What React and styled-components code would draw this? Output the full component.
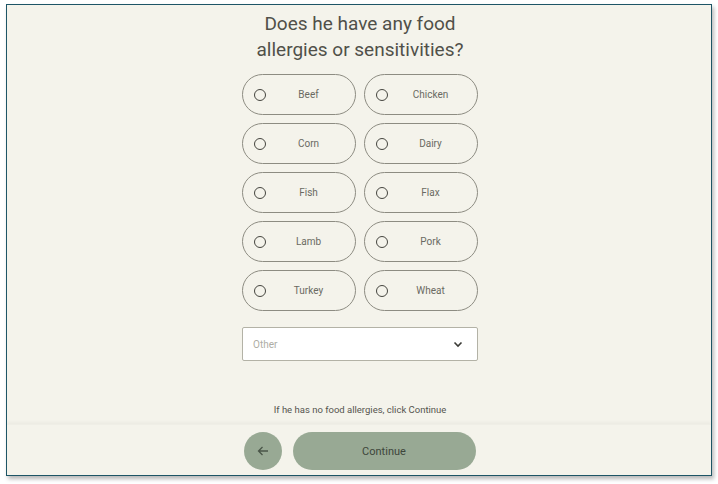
import React from "react";
import styled, { createGlobalStyle } from "styled-components";

const GlobalStyle = createGlobalStyle`
  html, body {
    margin: 0;
    padding: 0;
    background: #ffffff;
    font-family: Roboto, "Liberation Sans", sans-serif;
  }
`;

const Page = styled.div`
  padding: 4px 6px;
  width: 718px;
  height: 484px;
  box-sizing: border-box;
`;

const Frame = styled.div`
  width: 706px;
  height: 472px;
  box-sizing: border-box;
  border: 1px solid #1d5566;
  box-shadow: 2px 3px 4px rgba(0, 0, 0, 0.28);
  background: #f4f3eb;
  display: flex;
  flex-direction: column;
  overflow: hidden;
`;

const Main = styled.div`
  flex: 1;
  display: flex;
  flex-direction: column;
  align-items: center;
  padding: 6px 0 0 2px;
`;

const Title = styled.h1`
  margin: 0;
  font-size: 19px;
  line-height: 26px;
  font-weight: 400;
  color: #505049;
  text-align: center;
`;

const Grid = styled.div`
  margin-top: 11px;
  display: grid;
  grid-template-columns: 114px 114px;
  grid-auto-rows: 41px;
  gap: 8px 8px;
`;

const Pill = styled.label`
  display: flex;
  align-items: center;
  box-sizing: border-box;
  border: 1px solid #8d8c82;
  border-radius: 21px;
  padding: 0 10px 0 11px;
  cursor: pointer;
`;

const Radio = styled.span`
  width: 12px;
  height: 12px;
  box-sizing: border-box;
  border: 1.6px solid #45453f;
  border-radius: 50%;
  flex-shrink: 0;
`;

const PillLabel = styled.span`
  flex: 1;
  text-align: center;
  margin-left: 6px;
  font-size: 10px;
  color: #6a6a62;
`;

const Select = styled.div`
  margin-top: 16px;
  width: 236px;
  height: 34px;
  box-sizing: border-box;
  background: #ffffff;
  border: 1px solid #b3b2a6;
  border-radius: 2px;
  display: flex;
  align-items: center;
  justify-content: space-between;
  padding: 0 14px 0 10px;
`;

const Placeholder = styled.span`
  font-size: 10px;
  color: #aeada5;
`;

const Hint = styled.p`
  margin: 42px 0 0;
  font-size: 9.5px;
  line-height: 14px;
  color: #55554f;
`;

const Footer = styled.div`
  height: 51px;
  flex-shrink: 0;
  display: flex;
  align-items: center;
  justify-content: center;
  gap: 11px;
  padding: 2px 0 0 1px;
  box-sizing: border-box;
  box-shadow: 0 -2px 3px rgba(0, 0, 0, 0.035);
  border-top: 1px solid #efeee6;
`;

const BackButton = styled.button`
  width: 38px;
  height: 38px;
  border-radius: 50%;
  border: none;
  background: #98a994;
  display: flex;
  align-items: center;
  justify-content: center;
  padding: 0;
`;

const ContinueButton = styled.button`
  width: 183px;
  height: 38px;
  border-radius: 19px;
  border: none;
  background: #98a994;
  font-family: Roboto, "Liberation Sans", sans-serif;
  font-size: 11px;
  color: #3d463b;
`;

const options = ["Beef", "Chicken", "Corn", "Dairy", "Fish", "Flax", "Lamb", "Pork", "Turkey", "Wheat"];

export default function App() {
  return (
    <Page>
      <GlobalStyle />
      <Frame>
        <Main>
          <Title>
            Does he have any food
            <br />
            allergies or sensitivities?
          </Title>
          <Grid>
            {options.map((item) => (
              <Pill key={item}>
                <Radio />
                <PillLabel>{item}</PillLabel>
              </Pill>
            ))}
          </Grid>
          <Select>
            <Placeholder>Other</Placeholder>
            <svg width="10" height="7" viewBox="0 0 10 7">
              <polyline points="1.5,1.5 5,5 8.5,1.5" fill="none" stroke="#3b3b36" strokeWidth="1.6" />
            </svg>
          </Select>
          <Hint>If he has no food allergies, click Continue</Hint>
        </Main>
        <Footer>
          <BackButton aria-label="Back">
            <svg width="12" height="10" viewBox="0 0 12 10">
              <path d="M11 5H1.5M5.5 1L1.5 5l4 4" fill="none" stroke="#4a5548" strokeWidth="1.3" />
            </svg>
          </BackButton>
          <ContinueButton>Continue</ContinueButton>
        </Footer>
      </Frame>
    </Page>
  );
}
